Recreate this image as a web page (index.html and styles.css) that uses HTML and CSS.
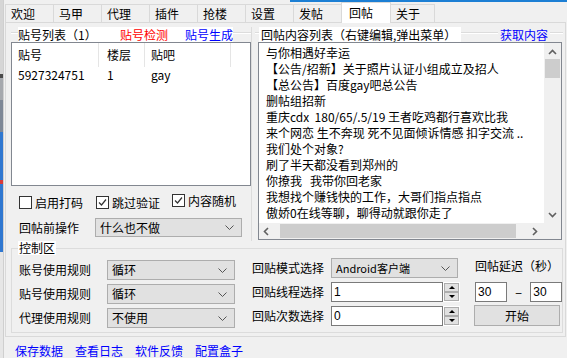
FILE: index.html
```html
<!DOCTYPE html>
<html lang="zh-CN">
<head>
  <meta charset="UTF-8">
  <title>回帖</title>
  <link rel="stylesheet" href="styles.css">
</head>
<body>
<div class="screen">
  <div class="desk"></div>
  <div class="app">
    <div class="topline"></div>
    <div class="tabs">
      <div class="tab">欢迎</div>
      <div class="tab">马甲</div>
      <div class="tab">代理</div>
      <div class="tab">插件</div>
      <div class="tab">抢楼</div>
      <div class="tab">设置</div>
      <div class="tab">发帖</div>
      <div class="tab on">回帖</div>
      <div class="tab last">关于</div>
    </div>

    <div class="page">
      <div class="upper">
        <!-- 贴号列表 -->
        <div class="lgroup">
          <div class="ghead">
            <div class="cap lcap">
              <span class="cap-text">贴号列表（1）</span>
              <a class="red">贴号检测</a>
              <a class="blue">贴号生成</a>
            </div>
          </div>
          <div class="listview">
            <div class="lv-head">
              <div class="c1">贴号</div>
              <div class="c2">楼层</div>
              <div class="c3">贴吧</div>
            </div>
            <div class="lv-row">
              <div class="c1">5927324751</div>
              <div class="c2">1</div>
              <div class="c3">gay</div>
            </div>
          </div>
          <div class="checks">
            <label class="chk w1"><span class="box"></span>启用打码</label>
            <label class="chk w2"><span class="box"><svg width="11" height="11" viewBox="0 0 11 11"><path d="M2 5.5 L4.5 8 L9 2.5" fill="none" stroke="#333" stroke-width="1.2"/></svg></span>跳过验证</label>
            <label class="chk w3"><span class="box"><svg width="11" height="11" viewBox="0 0 11 11"><path d="M2 5.5 L4.5 8 L9 2.5" fill="none" stroke="#333" stroke-width="1.2"/></svg></span>内容随机</label>
          </div>
          <div class="pre-row">
            <span class="pre-label">回帖前操作</span>
            <div class="combo wide">什么也不做<svg class="chev" width="9" height="5" viewBox="0 0 9 5"><path d="M0.5 0.5 L4.5 4.5 L8.5 0.5" fill="none" stroke="#555"/></svg></div>
          </div>
        </div>

        <!-- 回贴内容列表 -->
        <div class="rgroup">
          <div class="ghead">
            <div class="cap rcap">回帖内容列表（右键编辑,弹出菜单）</div>
            <a class="blue fetch">获取内容</a>
          </div>
          <div class="listbox">
            <div class="lines">
              <div>与你相遇好幸运</div>
              <div>【公告/招新】关于照片认证小组成立及招人</div>
              <div>【总公告】百度gay吧总公告</div>
              <div>删帖组招新</div>
              <div>重庆cdx  180/65/.5/19 王者吃鸡都行喜欢比我</div>
              <div>来个网恋 生不奔现 死不见面倾诉情感 扣字交流 ..</div>
              <div>我们处个对象?</div>
              <div>刷了半天都没看到郑州的</div>
              <div>你撩我   我带你回老家</div>
              <div>我想找个赚钱快的工作，大哥们指点指点</div>
              <div>傲娇0在线等聊，聊得动就跟你走了</div>
              <div>找个处对象的</div>
            </div>
            <div class="vscroll">
              <svg width="9" height="6" viewBox="0 0 9 6"><path d="M1 5 L4.5 1.5 L8 5" fill="none" stroke="#606060" stroke-width="1.6"/></svg>
              <div class="vthumb"></div>
              <div class="spacer"></div>
              <svg width="9" height="6" viewBox="0 0 9 6"><path d="M1 1 L4.5 4.5 L8 1" fill="none" stroke="#606060" stroke-width="1.6"/></svg>
            </div>
            <div class="hscroll">
              <svg width="6" height="9" viewBox="0 0 6 9"><path d="M5 1 L1.5 4.5 L5 8" fill="none" stroke="#606060" stroke-width="1.6"/></svg>
              <div class="hthumb"></div>
              <svg width="6" height="9" viewBox="0 0 6 9"><path d="M1 1 L4.5 4.5 L1 8" fill="none" stroke="#606060" stroke-width="1.6"/></svg>
            </div>
            <div class="corner"></div>
          </div>
        </div>
      </div>

      <!-- 控制区 -->
      <div class="ctl">
        <div class="ctl-cap">控制区</div>
        <div class="ctl-body">
          <div class="col1">
            <span>账号使用规则</span>
            <div class="combo">循环<svg class="chev" width="9" height="5" viewBox="0 0 9 5"><path d="M0.5 0.5 L4.5 4.5 L8.5 0.5" fill="none" stroke="#555"/></svg></div>
            <span>贴号使用规则</span>
            <div class="combo">循环<svg class="chev" width="9" height="5" viewBox="0 0 9 5"><path d="M0.5 0.5 L4.5 4.5 L8.5 0.5" fill="none" stroke="#555"/></svg></div>
            <span>代理使用规则</span>
            <div class="combo">不使用<svg class="chev" width="9" height="5" viewBox="0 0 9 5"><path d="M0.5 0.5 L4.5 4.5 L8.5 0.5" fill="none" stroke="#555"/></svg></div>
          </div>
          <div class="col2">
            <span>回贴模式选择</span>
            <div class="combo mode">Android客户端<svg class="chev" width="9" height="5" viewBox="0 0 9 5"><path d="M0.5 0.5 L4.5 4.5 L8.5 0.5" fill="none" stroke="#555"/></svg></div>
            <span>回贴线程选择</span>
            <div class="spin"><div class="field">1</div><div class="arrows"><div class="up"></div><div class="down"></div></div></div>
            <span>回贴次数选择</span>
            <div class="spin"><div class="field">0</div><div class="arrows"><div class="up"></div><div class="down"></div></div></div>
          </div>
          <div class="col3">
            <div class="delay-label">回帖延迟（秒）</div>
            <div class="delay-row">
              <div class="field small">30</div>
              <span class="dash">−</span>
              <div class="field small">30</div>
            </div>
            <div class="btn">开始</div>
          </div>
        </div>
      </div>
    </div>

    <div class="links">
      <a>保存数据</a>
      <a>查看日志</a>
      <a>软件反馈</a>
      <a>配置盒子</a>
    </div>
  </div>
</div>
</body>
</html>
```

FILE: styles.css
```css
* {
  box-sizing: border-box;
}

body {
  margin: 0;
  background: #f0f0f0;
  font-family: "Noto Sans CJK SC", "Microsoft YaHei", sans-serif;
  font-size: 12px;
  color: #000;
}

.screen {
  display: flex;
  width: 567px;
  height: 358px;
  overflow: hidden;
}

.desk {
  width: 4px;
  flex: none;
  border-right: 1px solid #cfcfcf;
  background: linear-gradient(to bottom,
    #d6d6d6 0 74px, #4a4a4a 74px 78px, #a5a8ad 78px 100px,
    #7d8796 100px 132px, #2f77d0 132px 180px, #d83a3a 180px 184px,
    #2f77d0 184px 252px, #e6e6e6 252px);
}

.app {
  flex: 1;
  display: flex;
  flex-direction: column;
}

.topline {
  height: 2px;
  background: linear-gradient(to right, transparent 286px, #1c7fd4 286px);
}

/* tabs */
.tabs {
  display: flex;
  align-items: flex-end;
  height: 20px;
  padding-left: 1px;
}

.tab {
  width: 48px;
  height: 18px;
  padding-left: 5px;
  line-height: 17px;
  border: 1px solid #d9d9d9;
  border-right: none;
  border-bottom: none;
  background: #f0f0f0;
}

.tab.on {
  width: 50px;
  height: 21px;
  margin-bottom: -1px;
  padding-left: 7px;
  line-height: 19px;
  background: #fff;
  border-right: 1px solid #d9d9d9;
  position: relative;
  z-index: 1;
}

.tab.last {
  width: 44px;
  border-left: none;
  border-right: 1px solid #d9d9d9;
}

/* page */
.page {
  margin-left: 1px;
  width: 561px;
  height: 315px;
  border: 1px solid #d9d9d9;
  padding: 4px 2px 0 5px;
}

.upper {
  display: grid;
  grid-template-columns: 241px 1fr;
  column-gap: 3px;
  height: 214px;
}

.ghead {
  display: flex;
  height: 15px;
  line-height: 15px;
  background: linear-gradient(to bottom, transparent 5px, #dcdcdc 5px 6px, #fff 6px 7px, transparent 7px);
}

.cap {
  background: #fff;
  white-space: nowrap;
}

.lcap {
  display: flex;
  margin-left: 7px;
  width: 215px;
}

.cap-text {
  width: 102px;
}

.red {
  color: #f00;
  margin-right: 17px;
}

.blue {
  color: #00f;
}

.rcap {
  margin-left: 4px;
  padding: 0 5px 0 2px;
}

.fetch {
  margin-left: auto;
  margin-right: 13px;
  padding: 0 2px;
  background: #f0f0f0;
}

/* left group */
.lgroup {
  border-right: 1px solid #dcdcdc;
}

.listview {
  width: 240px;
  height: 144px;
  border: 1px solid #828790;
  background: #fff;
}

.lv-head, .lv-row {
  display: flex;
}

.lv-head {
  height: 24px;
  line-height: 24px;
}

.lv-head div {
  border-right: 1px solid #e5e5e5;
}

.lv-row {
  height: 16px;
  line-height: 16px;
}

.c1, .c2, .c3 {
  padding-left: 6px;
}

.c1 { width: 87px; }
.c2 { width: 46px; padding-left: 8px; }
.c3 { width: 86px; }

.checks {
  display: flex;
  align-items: center;
  height: 15px;
  margin-top: 9px;
  padding-left: 8px;
}

.chk {
  display: flex;
  align-items: center;
  gap: 3px;
  line-height: 15px;
}

.w1 { width: 77px; }
.w2 { width: 76px; }
.w3 { margin-bottom: 5px; }

.box {
  width: 13px;
  height: 13px;
  border: 1px solid #333;
  background: #fff;
  display: flex;
}

.pre-row {
  display: flex;
  align-items: center;
  margin-top: 8px;
  padding-left: 8px;
}

.pre-label {
  width: 76px;
}

.combo {
  display: flex;
  align-items: center;
  justify-content: space-between;
  height: 20px;
  padding: 0 7px 0 4px;
  border: 1px solid #adadad;
  background: #e1e1e1;
  line-height: 16px;
}

.combo.wide {
  width: 147px;
  height: 19px;
}

/* right group */
.listbox {
  display: grid;
  grid-template-columns: 1fr 17px;
  grid-template-rows: 1fr 16px;
  margin-left: 3px;
  width: 304px;
  height: 198px;
  border: 1px solid #828790;
  background: #fff;
}

.lines {
  overflow: hidden;
  padding: 2px 0 0 7px;
  line-height: 16px;
}

.lines div {
  white-space: pre;
}

.vscroll {
  display: flex;
  flex-direction: column;
  align-items: center;
  background: #f0f0f0;
  padding: 6px 0 5px;
}

.vthumb {
  width: 15px;
  height: 19px;
  margin-top: 4px;
  background: #cdcdcd;
}

.spacer {
  flex: 1;
}

.hscroll {
  display: flex;
  align-items: center;
  background: #f0f0f0;
  padding: 0 6px 0 4px;
}

.hthumb {
  width: 236px;
  height: 14px;
  margin: 0 auto 0 11px;
  background: #cdcdcd;
}

.corner {
  background: #f0f0f0;
}

/* control area */
.ctl {
  margin-top: 7px;
  height: 85px;
  border: 1px solid #dcdcdc;
}

.ctl-cap {
  width: fit-content;
  margin: -8px 0 0 6px;
  padding: 0 1px;
  line-height: 14px;
  background: #fff;
}

.ctl-body {
  display: flex;
  padding-left: 7px;
}

.col1, .col2 {
  display: grid;
  grid-template-rows: repeat(3, 20px);
  row-gap: 4px;
  align-items: center;
  line-height: 16px;
}

.col1 {
  grid-template-columns: 88px 128px;
  margin-top: 5px;
}

.col2 {
  grid-template-columns: 79px 129px;
  margin: 3px 0 0 17px;
}

.combo.mode {
  width: 127px;
  font-size: 11px;
}

.spin {
  display: flex;
  height: 20px;
}

.field {
  height: 20px;
  padding-left: 2px;
  line-height: 18px;
  border: 1px solid #7a7a7a;
  background: #fff;
  font-family: "Liberation Sans", Arial, sans-serif;
}

.spin .field {
  width: 112px;
}

.arrows {
  display: flex;
  flex-direction: column;
  width: 17px;
  border: 1px solid #fff;
}

.up, .down {
  flex: 1;
  display: flex;
  align-items: center;
  justify-content: center;
  border: 1px solid #adadad;
  background: #e1e1e1;
}

.up::after {
  content: "";
  border: 3px solid transparent;
  border-bottom: 3px solid #000;
  border-top: none;
}

.down::after {
  content: "";
  border: 3px solid transparent;
  border-top: 3px solid #000;
  border-bottom: none;
}

.col3 {
  margin: 3px 0 0 14px;
  width: 88px;
}

.delay-label {
  line-height: 16px;
  padding-left: 1px;
}

.delay-row {
  display: flex;
  align-items: center;
  margin: 8px 0 0 1px;
}

.field.small {
  width: 32px;
}

.dash {
  width: 24px;
  text-align: center;
}

.btn {
  margin-top: 3px;
  width: 86px;
  height: 21px;
  line-height: 19px;
  text-align: center;
  border: 1px solid #adadad;
  background: #e1e1e1;
}

/* bottom links */
.links {
  display: flex;
  gap: 12px;
  margin-top: 7px;
  padding-left: 11px;
  line-height: 14px;
}

.links a {
  color: #00f;
}
```
